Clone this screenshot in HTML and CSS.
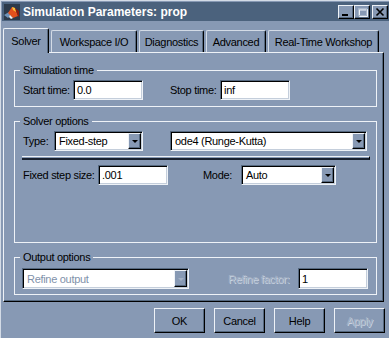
FILE: index.html
```html
<!doctype html>
<html>
	<head>
		<title>Simulation Parameters: prop</title>
		<link rel="stylesheet" href="styles.css">
	</head>

	<body>
		<div class="window">
			<div class="titlebar">
				<svg class="app-icon" width="16" height="16" viewBox="0 0 16 16">
					<rect x="0" y="0" width="16" height="16" fill="#2c3a4a" />
					<polygon points="0,11 5,8 8,10 4,14" fill="#6f93b8" />
					<polygon points="4,9 8,3 11,4 14,12 9,14 6,11" fill="#e2501c" />
					<polygon points="8,3 11,4 12,8 9,6" fill="#f7c53a" />
					<polygon points="11,4 15,7 15,13 14,12" fill="#8c1d0c" />
					<polygon points="6,11 9,14 7,15 5,13" fill="#f2f2f2" />
				</svg>
				<span class="title">Simulation Parameters: prop</span>
				<div class="caption-buttons">
					<span class="cap-btn">
						<svg width="14" height="12" viewBox="0 0 14 12">
							<rect x="3" y="8" width="6" height="2" fill="#000" />
						</svg>
					</span>
					<span class="cap-btn">
						<svg width="14" height="12" viewBox="0 0 14 12">
							<path d="M3.5 2.5h8v7h-8z M3 3h9" fill="none" stroke="#eef2f7" transform="translate(1,1)" />
							<path d="M3.5 2.5h8v7h-8z M3 3h9" fill="none" stroke="#a8b6c9" />
						</svg>
					</span>
					<span class="cap-btn cap-close">
						<svg width="14" height="12" viewBox="0 0 14 12">
							<path d="M3.5 2.5l7 7M10.5 2.5l-7 7" stroke="#000" stroke-width="1.6" />
						</svg>
					</span>
				</div>
			</div>

			<div class="tabs">
				<div class="tab tab-solver active">Solver</div>
				<div class="tab tab-workspace">Workspace I/O</div>
				<div class="tab tab-diagnostics">Diagnostics</div>
				<div class="tab tab-advanced">Advanced</div>
				<div class="tab tab-rtw">Real-Time Workshop</div>
			</div>

			<div class="panel">
				<div class="group group-sim">
					<div class="group-title">Simulation time</div>
					<div class="row">
						<label class="lbl lbl-start">Start time:</label>
						<input class="field" type="text" value="0.0" />
						<label class="lbl lbl-stop">Stop time:</label>
						<input class="field" type="text" value="inf" />
					</div>
				</div>

				<div class="group group-solver">
					<div class="group-title">Solver options</div>
					<div class="row">
						<label class="lbl lbl-type">Type:</label>
						<div class="combo combo-type">
							<span class="combo-text">Fixed-step</span>
							<span class="combo-btn"><i class="arrow"></i></span>
						</div>
						<div class="combo combo-solver">
							<span class="combo-text">ode4 (Runge-Kutta)</span>
							<span class="combo-btn"><i class="arrow"></i></span>
						</div>
					</div>
					<div class="separator"></div>
					<div class="row">
						<label class="lbl lbl-step">Fixed step size:</label>
						<input class="field" type="text" value=".001" />
						<label class="lbl lbl-mode">Mode:</label>
						<div class="combo combo-mode">
							<span class="combo-text">Auto</span>
							<span class="combo-btn"><i class="arrow"></i></span>
						</div>
					</div>
				</div>

				<div class="group group-output">
					<div class="group-title">Output options</div>
					<div class="row row-output">
						<div class="combo combo-refine">
							<span class="combo-text">Refine output</span>
							<span class="combo-btn"><i class="arrow"></i></span>
						</div>
						<label class="lbl lbl-factor disabled">Refine factor:</label>
						<input class="field field-factor" type="text" value="1" />
					</div>
				</div>
			</div>

			<div class="actions">
				<button class="btn">OK</button>
				<button class="btn">Cancel</button>
				<button class="btn">Help</button>
				<button class="btn disabled">Apply</button>
			</div>
		</div>
	</body>
</html>
```

FILE: styles.css
```css
:root {
	--face: #8799b4;
	--title: #4b627d;
	--light: #d3dbe6;
	--white: #eef2f7;
	--shadow: #55687f;
	--black: #000;
	--gray-text: #a3b1c5;
}

* {
	box-sizing: border-box;
}

body {
	margin: 0;
	background-color: var(--face);
	font-family: "Liberation Sans", Arial, sans-serif;
	font-size: 11px;
	letter-spacing: -0.3px;
	color: var(--black);
}

.window {
	width: 389px;
	height: 338px;
	padding: 2px 0 0 2px;
	box-shadow: inset 1px 1px 0 var(--light);
}

/* title bar */
.titlebar {
	display: flex;
	align-items: center;
	height: 19px;
	padding: 0 1px 0 2px;
	background-color: var(--title);
}

.app-icon {
	flex-shrink: 0;
}

.title {
	flex: 1;
	margin-left: 3px;
	color: #fff;
	font-weight: bold;
	font-size: 12px;
	letter-spacing: 0;
}

.caption-buttons {
	display: flex;
}

.cap-btn {
	display: flex;
	width: 16px;
	height: 14px;
	background-color: var(--face);
	border: 1px solid;
	border-color: var(--white) var(--black) var(--black) var(--white);
	box-shadow: inset -1px -1px 0 var(--shadow);
}

.cap-close {
	margin-left: 2px;
}

/* tabs */
.tabs {
	display: flex;
	align-items: flex-end;
	gap: 2px;
	height: 24px;
	margin-top: 7px;
	padding-left: 1px;
}

.tab {
	height: 22px;
	padding-top: 5px;
	line-height: 13px;
	text-align: center;
	background-color: var(--face);
	border-top: 1px solid var(--light);
	border-left: 1px solid var(--light);
	border-right: 1px solid var(--black);
	border-radius: 2px 2px 0 0;
	box-shadow: inset -1px 0 0 var(--shadow);
}

.tab.active {
	position: relative;
	z-index: 1;
	height: 25px;
	padding-top: 6px;
	margin-bottom: -1px;
	border-top-color: var(--white);
	border-left-color: var(--white);
}

.tab-solver { width: 46px; }
.tab-workspace { width: 86px; }
.tab-diagnostics { width: 65px; }
.tab-advanced { width: 60px; }
.tab-rtw { width: 111px; }

/* tab page */
.panel {
	width: 381px;
	height: 250px;
	margin-left: 1px;
	padding: 17px 0 0 10px;
	border: 1px solid var(--black);
	border-top-color: var(--white);
	border-left-color: var(--white);
	box-shadow: inset -1px -1px 0 var(--shadow);
}

.group {
	width: 363px;
	margin-bottom: 14px;
	padding-left: 8px;
	border: 1px solid var(--white);
}

.group-sim { height: 37px; }
.group-solver { height: 122px; }
.group-output { height: 38px; }

.group-title {
	width: max-content;
	margin: -8px 0 0 -3px;
	padding: 0 3px;
	line-height: 14px;
	background-color: var(--face);
}

.row {
	display: flex;
	align-items: center;
	height: 20px;
	margin-top: 3px;
}

.row-output {
	height: 21px;
	margin-top: 4px;
}

.lbl {
	flex-shrink: 0;
	white-space: nowrap;
}

.lbl-start { width: 50px; }
.lbl-stop { width: 50px; margin-left: 27px; }
.lbl-type { width: 31px; }
.lbl-step { width: 75px; }
.lbl-mode { width: 38px; margin-left: 35px; }
.lbl-factor { width: 70px; margin-left: 39px; }

.disabled {
	color: var(--gray-text);
	text-shadow: 1px 1px 0 #c9d3e0;
}

.field,
.combo {
	height: 100%;
	background-color: #fff;
	border: 1px solid;
	border-color: var(--shadow) var(--white) var(--white) var(--shadow);
	box-shadow:
		inset 1px 1px 0 var(--black),
		inset -1px -1px 0 #c4cedb;
}

.field {
	width: 70px;
	padding: 0 3px;
	font-family: "Liberation Sans", Arial, sans-serif;
	font-size: 11px;
	letter-spacing: -0.3px;
	color: var(--black);
	outline: none;
}

.combo {
	display: flex;
	align-items: center;
	padding: 1px;
}

.combo-type { width: 89px; }
.combo-solver { width: 197px; margin-left: 27px; }
.combo-mode { width: 95px; }
.combo-refine { width: 167px; margin-left: -1px; }

.combo-text {
	flex: 1;
	padding-left: 3px;
	white-space: nowrap;
}

.combo-refine .combo-text {
	color: #7f91aa;
}

.combo-btn {
	display: flex;
	align-items: center;
	justify-content: center;
	width: 13px;
	height: 100%;
	background-color: var(--face);
	border: 1px solid;
	border-color: var(--white) var(--black) var(--black) var(--white);
	box-shadow: inset -1px -1px 0 var(--shadow);
}

.arrow {
	width: 0;
	height: 0;
	border-left: 3px solid transparent;
	border-right: 3px solid transparent;
	border-top: 3px solid var(--black);
	margin-top: 1px;
}

.combo-refine .arrow {
	border-top-color: var(--gray-text);
}

.separator {
	width: 348px;
	height: 4px;
	margin: 5px 0 5px -1px;
	border-top: 1px solid var(--white);
	border-right: 1px solid var(--black);
	border-bottom: 2px solid #1a2230;
}

/* dialog buttons */
.actions {
	display: flex;
	justify-content: flex-end;
	gap: 9px;
	margin-top: 6px;
	padding-right: 4px;
}

.btn {
	width: 51px;
	height: 25px;
	padding: 0;
	font-family: "Liberation Sans", Arial, sans-serif;
	font-size: 11px;
	letter-spacing: -0.3px;
	color: var(--black);
	background-color: var(--face);
	border: 1px solid;
	border-color: var(--white) var(--black) var(--black) var(--white);
	box-shadow: inset -1px -1px 0 var(--shadow);
}

.btn.disabled {
	color: var(--gray-text);
}
```
